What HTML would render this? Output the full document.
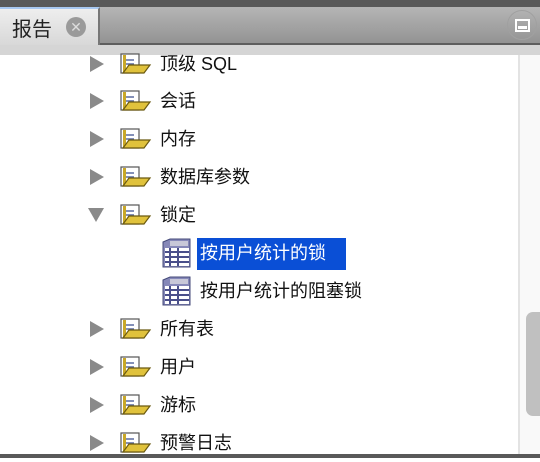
<!DOCTYPE html>
<html><head><meta charset="utf-8"><style>
body{margin:0;width:540px;height:458px;overflow:hidden;background:#fff;font-family:"Liberation Sans","Noto Sans CJK SC",sans-serif;position:relative}
.top{position:absolute;left:0;top:0;width:540px;height:7px;background:#595959}
.bar{position:absolute;left:0;top:7px;width:540px;height:38px;background:linear-gradient(#b5b5b5,#939393);border-bottom:2px solid #5e5e5e;box-sizing:border-box}
.tab{position:absolute;left:0;top:7px;width:100px;height:38px;background:linear-gradient(#eeeeee,#d8d8d8);border-top:2px solid #a8c8f0;border-right:2px solid #777;box-sizing:border-box}
.tab span{position:absolute;left:12px;top:4px;font-size:20px;color:#222}
.x{position:absolute;left:66px;top:8px;width:20px;height:20px;border-radius:50%;background:#9a9a9a;color:#ddd;font-size:14px;line-height:20px;text-align:center}
.strip{position:absolute;left:0;top:45px;width:540px;height:10px;background:#d5d5d5}
.mini{position:absolute;left:507px;top:10px;width:30px;height:30px;border-radius:50%;border:1px solid #a0a0a0;box-sizing:border-box}
.mini:after{content:"";position:absolute;left:7px;top:8px;width:11px;height:9px;border:2px solid #fff}
.mini:before{content:"";position:absolute;left:10px;top:15px;width:9px;height:3px;background:#fff}
.sb{position:absolute;left:518px;top:55px;width:22px;height:400px;background:#f9f9f9;border-left:2px solid #e3e3e3;box-sizing:border-box}
.thumb{position:absolute;left:526px;top:312px;width:14px;height:104px;background:#c0c0c0;border-radius:7px 0 0 7px}
.bot{position:absolute;left:0;top:454px;width:540px;height:4px;background:#595959}
.row{position:absolute;height:38px;font-size:18px;color:#111;line-height:38px;white-space:nowrap}
.arr{position:absolute;left:90px;width:0;height:0;border-top:8px solid transparent;border-bottom:8px solid transparent;border-left:14px solid #8a8a8a}
.darr{position:absolute;left:88px;width:0;height:0;border-left:8px solid transparent;border-right:8px solid transparent;border-top:14px solid #8a8a8a}
.fold{position:absolute;left:120px}
.tbl{position:absolute;left:160px}
.sel{position:absolute;left:197px;top:238px;width:149px;height:32px;background:#0a4fd6;color:#fff;font-size:18px;line-height:30px;padding-left:3px;box-sizing:border-box;white-space:nowrap}
</style></head><body>
<div class="top"></div>
<div class="bar"></div>
<div class="tab"><span>报告</span><div class="x">✕</div></div>
<div class="mini"></div>
<div class="strip"></div>
<div class="sb"></div><div class="thumb"></div>

<svg width="0" height="0" style="position:absolute"><defs>
<g id="f"><rect x="1" y="2" width="18" height="19" fill="#fff" stroke="#555" stroke-width="1.2"/><rect x="3" y="3" width="3" height="17" fill="#c9a828"/><line x1="6" y1="8" x2="14" y2="8" stroke="#5a6aa0" stroke-width="1.5"/><line x1="6" y1="12" x2="14" y2="12" stroke="#5a6aa0" stroke-width="1.5"/><path d="M3 21 L9 13 L30 13 L24 21 Z" fill="#e0c23c" stroke="#6b5a10" stroke-width="1.2"/></g>
<g id="t"><path d="M3 4 L10 1 L30 1 L30 29 L3 29 Z" fill="#8688b8" stroke="#444a7a"/><rect x="5" y="10" width="24" height="18" fill="#fff"/><g stroke="#4a4f8a" stroke-width="2"><line x1="5" y1="14" x2="29" y2="14"/><line x1="5" y1="19" x2="29" y2="19"/><line x1="5" y1="24" x2="29" y2="24"/><line x1="10" y1="10" x2="10" y2="28"/><line x1="18" y1="10" x2="18" y2="28"/></g><rect x="10" y="3" width="18" height="5" fill="#c8c8d8"/></g>
</defs></svg>

<div class="arr" style="top:56px"></div><svg class="fold" style="top:52px" width="32" height="24"><use href="#f"/></svg><div class="row" style="left:160px;top:45px">顶级 SQL</div>
<div class="arr" style="top:93px"></div><svg class="fold" style="top:89px" width="32" height="24"><use href="#f"/></svg><div class="row" style="left:160px;top:82px">会话</div>
<div class="arr" style="top:131px"></div><svg class="fold" style="top:127px" width="32" height="24"><use href="#f"/></svg><div class="row" style="left:160px;top:120px">内存</div>
<div class="arr" style="top:169px"></div><svg class="fold" style="top:165px" width="32" height="24"><use href="#f"/></svg><div class="row" style="left:160px;top:158px">数据库参数</div>
<div class="darr" style="top:208px"></div><svg class="fold" style="top:203px" width="32" height="24"><use href="#f"/></svg><div class="row" style="left:160px;top:196px">锁定</div>
<svg class="tbl" style="top:238px" width="32" height="30"><use href="#t"/></svg><div class="sel">按用户统计的锁</div>
<svg class="tbl" style="top:276px" width="32" height="30"><use href="#t"/></svg><div class="row" style="left:200px;top:272px">按用户统计的阻塞锁</div>
<div class="arr" style="top:321px"></div><svg class="fold" style="top:317px" width="32" height="24"><use href="#f"/></svg><div class="row" style="left:160px;top:310px">所有表</div>
<div class="arr" style="top:359px"></div><svg class="fold" style="top:355px" width="32" height="24"><use href="#f"/></svg><div class="row" style="left:160px;top:348px">用户</div>
<div class="arr" style="top:397px"></div><svg class="fold" style="top:393px" width="32" height="24"><use href="#f"/></svg><div class="row" style="left:160px;top:386px">游标</div>
<div class="arr" style="top:435px"></div><svg class="fold" style="top:431px" width="32" height="24"><use href="#f"/></svg><div class="row" style="left:160px;top:424px">预警日志</div>
<div class="bot"></div>
</body></html>
